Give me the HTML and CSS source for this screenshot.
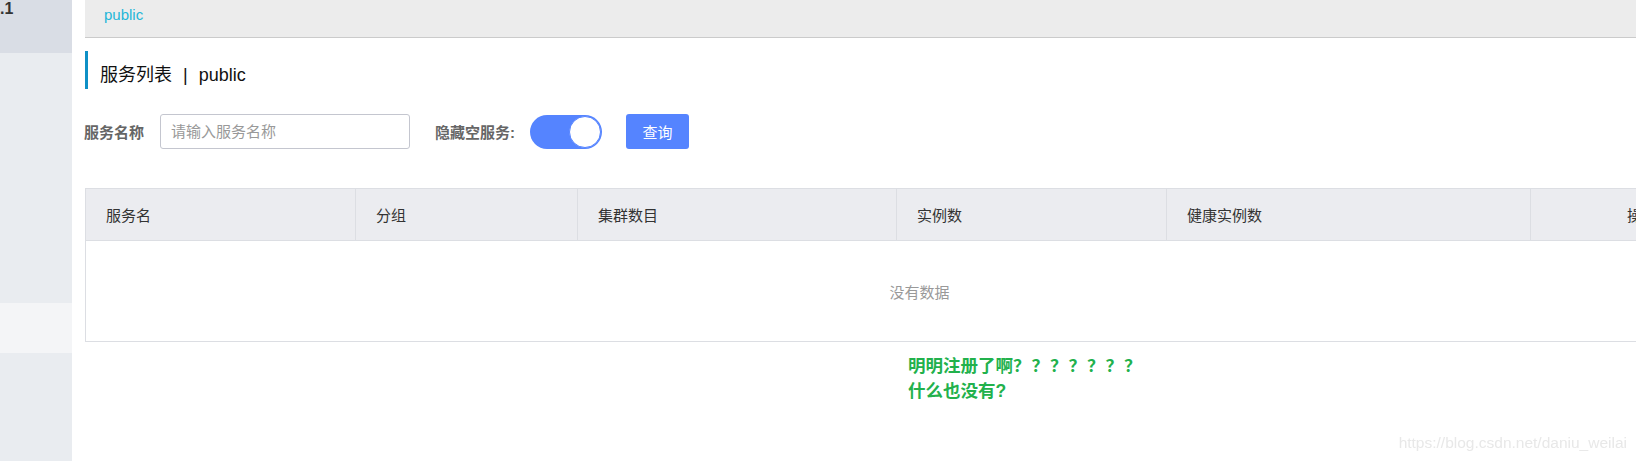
FILE: index.html
```html
<!DOCTYPE html>
<html lang="zh-CN">
<head>
<meta charset="utf-8">
<title>服务列表</title>
<link rel="stylesheet" href="styles.css">
</head>
<body>
<div class="layout">
  <aside class="sidebar">
    <div class="brand">.1</div>
    <nav class="menu">
      <div class="menu-item"></div>
      <div class="menu-item"></div>
      <div class="menu-item"></div>
      <div class="menu-item"></div>
      <div class="menu-item"></div>
      <div class="menu-item active"></div>
    </nav>
  </aside>
  <main class="main">
    <div class="crumb">public</div>
    <h1 class="title">服务列表 <span class="sep">|</span> public</h1>
    <form class="filter">
      <label class="label">服务名称</label>
      <input class="input" type="text" placeholder="请输入服务名称">
      <label class="label label-gap">隐藏空服务:</label>
      <span class="switch"><span class="knob"></span></span>
      <button class="btn" type="button">查询</button>
    </form>
    <table class="table">
      <colgroup>
        <col class="c1"><col class="c2"><col class="c3"><col class="c4"><col class="c5"><col class="c6">
      </colgroup>
      <thead>
        <tr>
          <th>服务名</th>
          <th>分组</th>
          <th>集群数目</th>
          <th>实例数</th>
          <th>健康实例数</th>
          <th class="center">操作</th>
        </tr>
      </thead>
      <tbody>
        <tr><td class="empty" colspan="6">没有数据</td></tr>
      </tbody>
    </table>
    <div class="note">明明注册了啊<span class="qs">？？？？？？？</span><br>什么也没有?</div>
  </main>
</div>
<div class="watermark">https://blog.csdn.net/daniu_weilai</div>
</body>
</html>
```
FILE: styles.css
```css
* { box-sizing: border-box; }
html, body { margin: 0; padding: 0; }
body {
  width: 1636px;
  height: 461px;
  overflow: hidden;
  background: #fff;
  font-family: "Liberation Sans", "Noto Sans CJK SC", sans-serif;
  color: #333;
}
.layout {
  display: flex;
  align-items: stretch;
  height: 461px;
}
.sidebar {
  width: 72px;
  flex-shrink: 0;
  background: #e9ecf0;
  display: flex;
  flex-direction: column;
}
.brand {
  height: 53px;
  background: #d9dde5;
  font-weight: bold;
  font-size: 16px;
  line-height: 18px;
  color: #333;
}
.menu { display: flex; flex-direction: column; }
.menu-item { height: 50px; }
.menu-item.active { background: #f4f5f7; }

.main {
  margin-left: 13px;
  width: 1668px;
  flex-shrink: 0;
}
.crumb {
  height: 38px;
  background: #ececec;
  border-bottom: 1px solid #cbcbcb;
  padding: 0 0 0 19px;
  line-height: 30px;
  font-size: 15px;
  color: #1fb6d8;
}
.title {
  margin: 13px 0 0;
  height: 38px;
  border-left: 3px solid #0e90c6;
  padding: 10px 0 0 12px;
  font-size: 18px;
  font-weight: normal;
  line-height: 28px;
  color: #111;
}
.sep { margin: 0 6px; }

.filter {
  margin-top: 25px;
  height: 35px;
  display: flex;
  align-items: center;
}
.label {
  font-size: 15px;
  font-weight: bold;
  color: #666;
  margin-left: -1px;
  margin-right: 16px;
}
.label-gap { margin-left: 25px; margin-right: 15px; }
.input {
  width: 250px;
  height: 35px;
  border: 1px solid #c4c6cf;
  border-radius: 3px;
  padding: 0 10px;
  font-family: inherit;
  font-size: 15px;
  outline: none;
}
.input::placeholder { color: #999; }
.switch {
  width: 72px;
  height: 34px;
  border-radius: 17px;
  background: #5584ff;
  display: flex;
  justify-content: flex-end;
  align-items: center;
  padding-right: 1px;
}
.knob {
  width: 32px;
  height: 32px;
  border-radius: 50%;
  background: #fff;
  border: 1px solid #5584ff;
}
.btn {
  margin-left: 24px;
  width: 63px;
  height: 35px;
  border: 0;
  border-radius: 3px;
  background: #5584ff;
  color: #fff;
  font-family: inherit;
  font-size: 15px;
  padding: 0;
}

.table {
  margin-top: 39px;
  width: 1668px;
  border-collapse: collapse;
  border: 1px solid #dcdee3;
  table-layout: fixed;
}
.c1 { width: 270px; }
.c2 { width: 222px; }
.c3 { width: 319px; }
.c4 { width: 270px; }
.c5 { width: 364px; }
.c6 { width: 223px; }
.table th {
  height: 52px;
  padding: 0 20px;
  background: #ebecf0;
  border-right: 1px solid #dcdee3;
  border-bottom: 1px solid #dcdee3;
  text-align: left;
  font-weight: normal;
  font-size: 15px;
  color: #333;
}
.table th.center { text-align: center; }
.table td.empty {
  height: 101px;
  text-align: center;
  font-size: 15px;
  color: #999;
}
.note {
  margin-top: 12px;
  padding-left: 823px;
  font-size: 17.5px;
  font-weight: bold;
  line-height: 25px;
  color: #22b14c;
}
.qs { letter-spacing: 1px; }
.watermark {
  position: fixed;
  right: 9px;
  bottom: 9px;
  font-family: "Liberation Sans", sans-serif;
  font-size: 15.5px;
  color: #e8e8e8;
}
```
